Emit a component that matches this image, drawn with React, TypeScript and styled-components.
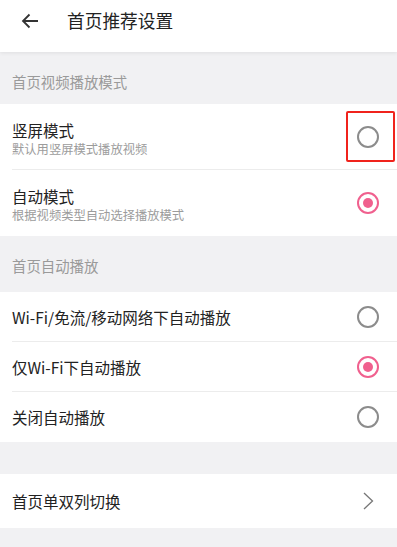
import styled, { createGlobalStyle } from 'styled-components'

const GlobalStyle = createGlobalStyle`
  html, body {
    margin: 0;
    padding: 0;
    background: #f1f1f3;
    font-family: "Noto Sans CJK SC", "Noto Sans", sans-serif;
  }
`

type Option = { title: string; desc?: string; checked: boolean; marked?: boolean }

const modeOptions: Option[] = [
  { title: '竖屏模式', desc: '默认用竖屏模式播放视频', checked: false, marked: true },
  { title: '自动模式', desc: '根据视频类型自动选择播放模式', checked: true },
]

const autoplayOptions: Option[] = [
  { title: 'Wi-Fi/免流/移动网络下自动播放', checked: false },
  { title: '仅Wi-Fi下自动播放', checked: true },
  { title: '关闭自动播放', checked: false },
]

export default function App() {
  return (
    <Page>
      <GlobalStyle />
      <Header>
        <BackButton aria-label="back">
          <svg width="18" height="16" viewBox="0 0 18 16" fill="none">
            <path d="M17 8H2M8.5 1.5L2 8l6.5 6.5" stroke="#333" strokeWidth="1.8" />
          </svg>
        </BackButton>
        <Title>首页推荐设置</Title>
      </Header>

      <SectionLabel $first>首页视频播放模式</SectionLabel>
      <Group>
        {modeOptions.map(o => (
          <Row key={o.title} $tall>
            <RowText>
              <RowTitle>{o.title}</RowTitle>
              {o.desc ? <RowDesc>{o.desc}</RowDesc> : null}
            </RowText>
            <Radio $checked={o.checked}>{o.marked ? <Marker /> : null}</Radio>
          </Row>
        ))}
      </Group>

      <SectionLabel>首页自动播放</SectionLabel>
      <Group>
        {autoplayOptions.map(o => (
          <Row key={o.title}>
            <RowTitle>{o.title}</RowTitle>
            <Radio $checked={o.checked} />
          </Row>
        ))}
      </Group>

      <Spacer />
      <Group>
        <Row $link>
          <RowTitle>首页单双列切换</RowTitle>
          <Chevron width="11" height="18" viewBox="0 0 11 18" fill="none">
            <path d="M1 1l8.5 8L1 17" stroke="#777" strokeWidth="1.3" />
          </Chevron>
        </Row>
      </Group>
    </Page>
  )
}

const Page = styled.div`
  width: 397px;
  min-height: 547px;
  background: #f1f1f3;
`

const Header = styled.header`
  position: relative;
  height: 52px;
  background: #fff;
  display: flex;
  align-items: center;
  box-shadow: 0 1px 4px rgba(0, 0, 0, 0.08);
  z-index: 1;
`

const BackButton = styled.span`
  width: 67px;
  display: flex;
  justify-content: flex-start;
  padding-left: 21px;
  box-sizing: border-box;
  margin-top: -11px;
`

const Title = styled.h1`
  margin: -12px 0 0;
  font-size: 17.7px;
  font-weight: 400;
  color: #222;
`

const SectionLabel = styled.div<{ $first?: boolean }>`
  height: ${p => (p.$first ? '52px' : '56px')};
  box-sizing: border-box;
  padding: 20px 12px 0;
  font-size: 14.4px;
  line-height: 20px;
  color: #9a9a9a;
`

const Group = styled.div`
  background: #fff;
`

const Row = styled.div<{ $tall?: boolean; $link?: boolean }>`
  position: relative;
  height: ${p => (p.$tall ? '66px' : p.$link ? '54px' : '50px')};
  margin-left: 12px;
  padding-right: 18px;
  display: flex;
  align-items: center;
  justify-content: space-between;
  border-bottom: 1px solid #ececec;
  box-sizing: border-box;
  &:last-child {
    border-bottom: none;
  }
`

const RowText = styled.div`
  display: flex;
  flex-direction: column;
  margin-top: 4px;
`

const RowTitle = styled.div`
  font-size: 15.5px;
  line-height: 20px;
  color: #222;
`

const RowDesc = styled.div`
  margin-top: 1px;
  font-size: 12.3px;
  line-height: 17px;
  color: #9c9c9c;
`

const Radio = styled.span<{ $checked?: boolean }>`
  position: relative;
  width: 22px;
  height: 22px;
  border-radius: 50%;
  box-sizing: border-box;
  border: 2px solid ${p => (p.$checked ? '#f0608e' : '#8c8c8c')};
  display: flex;
  align-items: center;
  justify-content: center;
  &::after {
    content: '';
    display: ${p => (p.$checked ? 'block' : 'none')};
    width: 10px;
    height: 10px;
    border-radius: 50%;
    background: #f0608e;
  }
`

const Marker = styled.span`
  position: absolute;
  left: -13px;
  top: -17px;
  width: 49px;
  height: 51px;
  box-sizing: border-box;
  border: 2px solid #f0231c;
  border-radius: 2px;
`

const Spacer = styled.div`
  height: 32px;
`

const Chevron = styled.svg`
  margin-right: 5px;
`
